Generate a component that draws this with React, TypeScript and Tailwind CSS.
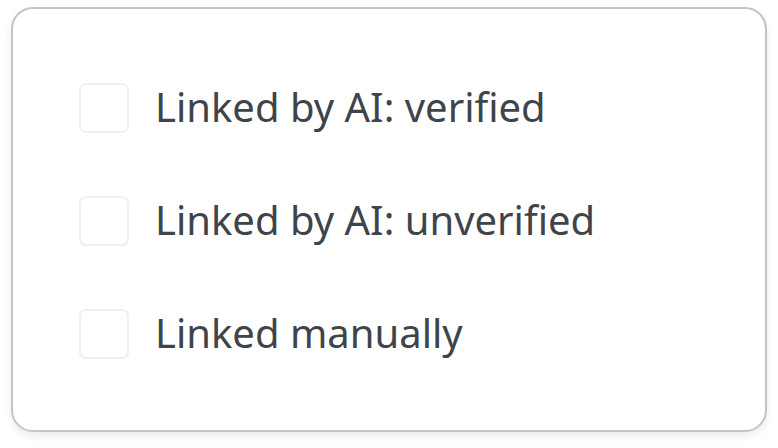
const options = [
  "Linked by AI: verified",
  "Linked by AI: unverified",
  "Linked manually",
];

export default function App() {
  return (
    <div className="w-[778px] h-[448px] bg-white pl-[11px] pt-[7px]">
      <div className="w-[756px] h-[425px] rounded-[22px] border-2 border-[#c4c4c4] bg-white shadow-[0_4px_8px_rgba(0,0,0,0.08)] pl-[66px] pt-[74px] flex flex-col gap-[63px]">
        {options.map((label) => (
          <label key={label} className="flex items-center h-[50px]">
            <span className="w-[50px] h-[50px] rounded-[7px] border-2 border-[#eef0f3] bg-white shrink-0" />
            <span
              className="ml-[26px] text-[40px] text-[#3f434a] leading-none -mt-[3px]"
              style={{ fontFamily: '"Noto Sans", sans-serif' }}
            >
              {label}
            </span>
          </label>
        ))}
      </div>
    </div>
  );
}
